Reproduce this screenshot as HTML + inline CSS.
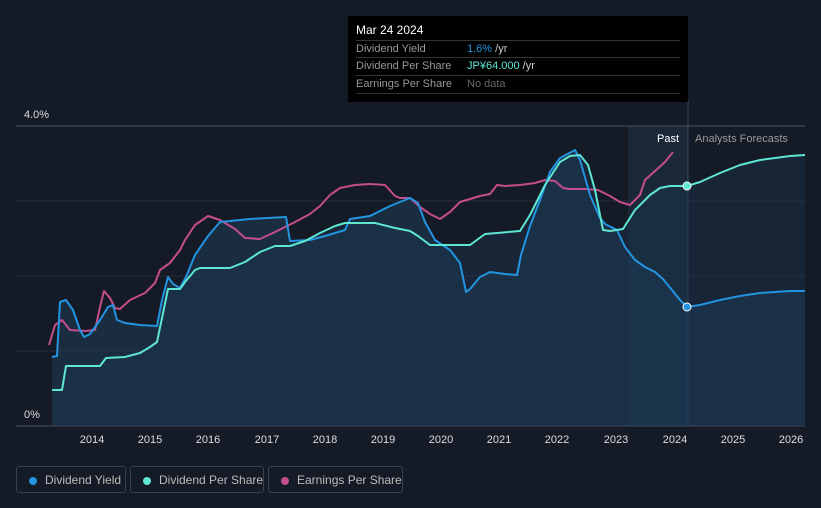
<!DOCTYPE html>
<html><head><meta charset="utf-8"><style>
body{margin:0;background:#151b26;font-family:"Liberation Sans",sans-serif;}
.wrap{position:relative;width:821px;height:508px;overflow:hidden;background:#151b26}
.tt{position:absolute;left:348px;top:16px;width:340px;height:86px;background:#000;}
.tt .h{position:absolute;left:8px;top:7px;color:#fff;font-size:12px}
.row{position:absolute;left:8px;width:324px;border-top:1px solid #333;height:17px;font-size:11px;color:#999;line-height:17px;white-space:nowrap}
.row span{position:absolute;left:111px}
.leg{position:absolute;top:466px;height:27px;border:1px solid #3a3f48;border-radius:3px;color:#bbb;font-size:12px;line-height:27px;box-sizing:border-box;white-space:nowrap}
.leg i{position:absolute;left:12px;top:10px;width:8px;height:8px;border-radius:50%}
.leg b{font-weight:normal;position:absolute;left:28px}
</style></head><body><div class="wrap">
<svg width="821" height="508" style="position:absolute;left:0;top:0">
<rect x="628" y="126" width="60" height="300" fill="#1a2838"/>
<line x1="16" y1="126" x2="805" y2="126" stroke="#4a4f58"/>
<g stroke="#262c37"><line x1="16" y1="201" x2="805" y2="201"/><line x1="16" y1="276" x2="805" y2="276"/><line x1="16" y1="351" x2="805" y2="351"/></g>
<line x1="16" y1="426" x2="805" y2="426" stroke="#4a4f58"/>
<line x1="688" y1="100" x2="688" y2="426" stroke="#2a4a6a"/>
<path d="M52,426 L52,357 57,356 60,302 66,300 73,310 80,330 84,337 90,334 100,320 108,307 113,305 117,320 125,323 140,325 157,326 162,300 168,277 173,284 180,288 186,277 195,255 208,236 220,222 250,219 286,217 290,241 310,240 325,236 345,230 350,219 370,216 390,206 410,198 418,203 425,222 435,240 450,250 460,263 466,292 470,289 480,277 490,272 505,274 517,275 521,255 530,226 540,200 550,172 560,158 575,150 580,160 590,195 600,218 605,224 617,230 625,247 635,260 645,267 655,272 663,279 672,290 680,300 687,307 700,305 720,300 740,296 760,293 790,291 805,291 L805,426Z" fill="#1e3a55" fill-opacity="0.55"/>
<path d="M52,426 L52,390 62,390 66,366 100,366 106,358 125,357 140,353 150,347 157,342 162,318 168,289 180,289 185,282 195,270 200,268 230,268 245,262 260,252 275,246 290,246 305,241 320,233 335,226 345,223 375,223 395,228 410,231 418,236 430,245 470,245 485,234 520,231 530,215 545,185 560,162 570,156 580,155 588,165 595,190 603,230 610,231 623,229 635,210 650,195 660,188 670,186 687,186 700,182 720,173 740,165 760,160 790,156 805,155 L805,426Z" fill="#1e3a55" fill-opacity="0.35"/>
<g fill="none" stroke-width="2" stroke-linejoin="round">
<path stroke="#c44d8c" d="M49,345 55,325 62,320 70,330 85,331 95,330 100,307 104,291 110,298 115,308 120,309 130,300 145,293 155,283 160,270 170,263 180,250 185,240 195,225 208,216 220,220 235,229 245,238 260,239 275,232 295,222 310,214 320,206 330,195 340,188 355,185 370,184 385,185 395,196 400,198 410,198 420,207 430,214 440,219 450,212 460,202 470,199 480,196 490,194 497,185 505,186 520,185 535,183 545,180 555,181 563,188 570,189 585,189 598,190 610,196 620,202 630,205 640,195 645,180 655,171 665,162 673,152"/>
<path stroke="#2394e0" d="M52,357 57,356 60,302 66,300 73,310 80,330 84,337 90,334 100,320 108,307 113,305 117,320 125,323 140,325 157,326 162,300 168,277 173,284 180,288 186,277 195,255 208,236 220,222 250,219 286,217 290,241 310,240 325,236 345,230 350,219 370,216 390,206 410,198 418,203 425,222 435,240 450,250 460,263 466,292 470,289 480,277 490,272 505,274 517,275 521,255 530,226 540,200 550,172 560,158 575,150 580,160 590,195 600,218 605,224 617,230 625,247 635,260 645,267 655,272 663,279 672,290 680,300 687,307 700,305 720,300 740,296 760,293 790,291 805,291"/>
<path stroke="#5ee6d2" d="M52,390 62,390 66,366 100,366 106,358 125,357 140,353 150,347 157,342 162,318 168,289 180,289 185,282 195,270 200,268 230,268 245,262 260,252 275,246 290,246 305,241 320,233 335,226 345,223 375,223 395,228 410,231 418,236 430,245 470,245 485,234 520,231 530,215 545,185 560,162 570,156 580,155 588,165 595,190 603,230 610,231 623,229 635,210 650,195 660,188 670,186 687,186 700,182 720,173 740,165 760,160 790,156 805,155"/>
</g>
<circle cx="687" cy="307" r="4" fill="#2394e0" stroke="#fff" stroke-width="1"/>
<circle cx="687" cy="186" r="4" fill="#5ee6d2" stroke="#fff" stroke-width="1"/>
<g fill="#ddd" font-size="11" font-family="Liberation Sans,sans-serif" text-anchor="middle">
<text x="92" y="443">2014</text><text x="150" y="443">2015</text><text x="208" y="443">2016</text><text x="267" y="443">2017</text><text x="325" y="443">2018</text><text x="383" y="443">2019</text><text x="441" y="443">2020</text><text x="499" y="443">2021</text><text x="557" y="443">2022</text><text x="616" y="443">2023</text><text x="675" y="443">2024</text><text x="733" y="443">2025</text><text x="791" y="443">2026</text>
</g>
<text x="24" y="118" fill="#ddd" font-size="11" font-family="Liberation Sans,sans-serif">4.0%</text>
<text x="24" y="418" fill="#ddd" font-size="11" font-family="Liberation Sans,sans-serif">0%</text>
<text x="679" y="142" fill="#fff" font-size="11" text-anchor="end" font-family="Liberation Sans,sans-serif">Past</text>
<text x="695" y="142" fill="#999" font-size="11" font-family="Liberation Sans,sans-serif">Analysts Forecasts</text>
</svg>
<div class="tt"><div class="h">Mar 24 2024</div>
<div class="row" style="top:24px">Dividend Yield<span><font color="#2394e0">1.6%</font> <font color="#ccc">/yr</font></span></div>
<div class="row" style="top:41px">Dividend Per Share<span><font color="#5ee6d2">JP¥64.000</font> <font color="#ccc">/yr</font></span></div>
<div class="row" style="top:59px;border-bottom:1px solid #333">Earnings Per Share<span style="color:#666">No data</span></div>
</div>
<div class="leg" style="left:16px;width:110px"><i style="background:#2394e0"></i><b>Dividend Yield</b></div>
<div class="leg" style="left:130px;width:134px"><i style="background:#5ee6d2"></i><b>Dividend Per Share</b></div>
<div class="leg" style="left:268px;width:135px"><i style="background:#c44d8c"></i><b>Earnings Per Share</b></div>
</div></body></html>
